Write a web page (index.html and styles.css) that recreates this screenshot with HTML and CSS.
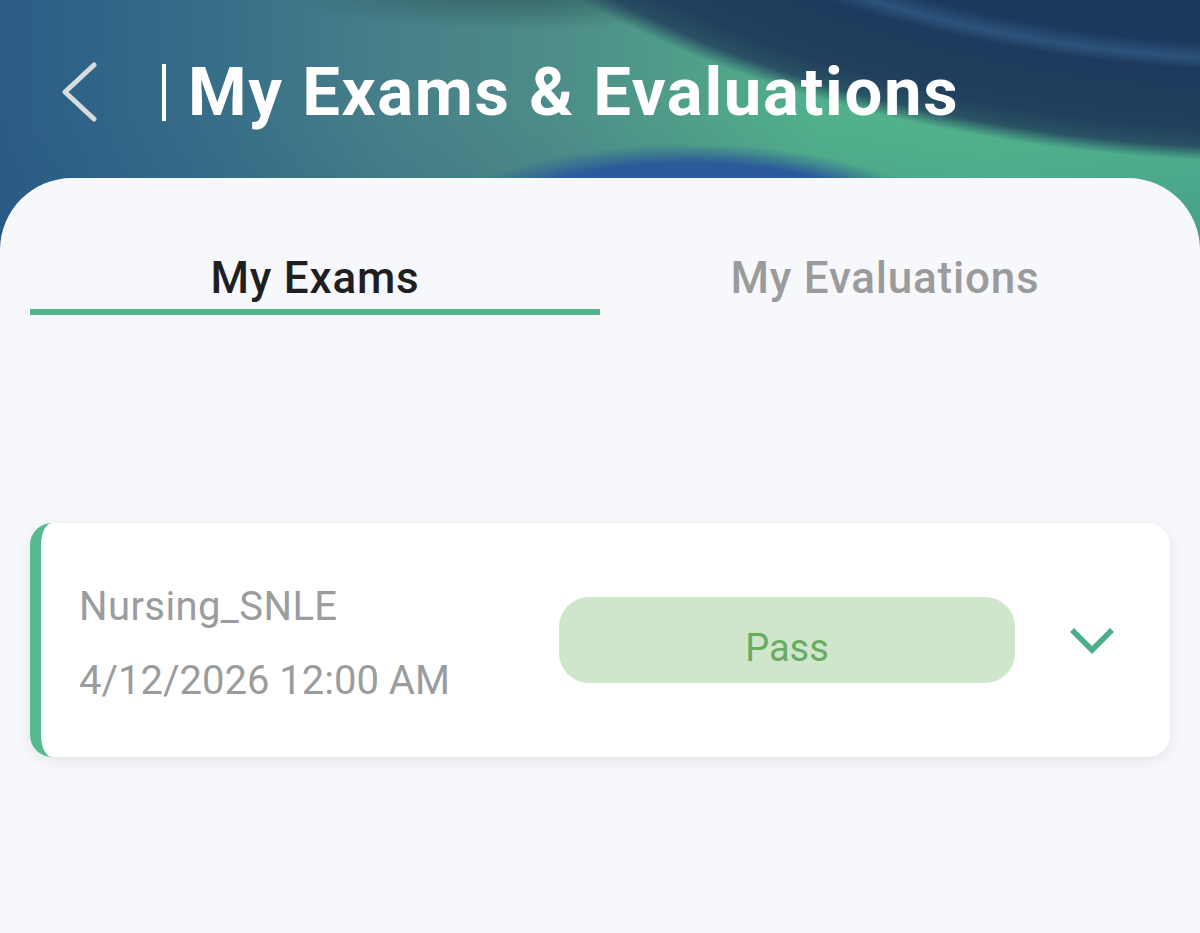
FILE: index.html
```html
<!DOCTYPE html>
<html lang="en">
  <head>
    <meta charset="UTF-8" />
    <meta name="viewport" content="width=device-width, initial-scale=1.0" />
    <title>My Exams &amp; Evaluations</title>
    <link rel="stylesheet" href="styles.css">
  </head>
  <body>
    <div class="page">
      <header class="top-bar">
        <button class="back-button" aria-label="Back">
          <svg width="38" height="60" viewBox="0 0 38 60">
            <path d="M34 3 L5 30 L34 57" fill="none" stroke="#d9dcdf" stroke-width="5" stroke-linecap="round" stroke-linejoin="round" />
          </svg>
        </button>
        <span class="title-divider"></span>
        <h1 class="page-title">My Exams &amp; Evaluations</h1>
      </header>

      <main class="sheet">
        <nav class="tabs">
          <div class="tab active">My Exams</div>
          <div class="tab">My Evaluations</div>
        </nav>

        <ul class="exam-list">
          <li class="exam-card">
            <div class="exam-info">
              <p class="exam-name">Nursing_SNLE</p>
              <p class="exam-date">4/12/2026 12:00 AM</p>
            </div>
            <span class="status-pill pass">Pass</span>
            <button class="expand-button" aria-label="Expand">
              <svg width="44" height="26" viewBox="0 0 44 26">
                <path d="M4 4 L22 22 L40 4" fill="none" stroke="#4caf8a" stroke-width="5.5" stroke-linecap="square" />
              </svg>
            </button>
          </li>
        </ul>
      </main>
    </div>
  </body>
</html>
```

FILE: styles.css
```css
* {
  box-sizing: border-box;
  font-family: Roboto, "Noto Sans", sans-serif;
  margin: 0;
}
body {
  background-color: #f7f8fc;
}
.page {
  width: 1200px;
  min-height: 933px;
  background-color: #f7f8fc;
  background-image:
    /* blue wave under the title */
    radial-gradient(ellipse 260px 88px at 690px 232px, #2b5ea2 0%, #2a5a9a 78%, rgba(42, 90, 154, 0) 100%),
    /* light streak in the navy area */
    radial-gradient(ellipse 800px 372px at 1300px -300px, rgba(60, 110, 160, 0) 93%, rgba(58, 105, 150, 0.55) 97%, rgba(60, 110, 160, 0) 100%),
    /* navy top right */
    radial-gradient(ellipse 947px 463px at 1300px -300px, #1a3457 0%, #1c395c 78%, #213f5d 93%, rgba(34, 66, 92, 0.85) 97%, rgba(34, 66, 92, 0) 100%),
    /* dark shade at the top middle */
    radial-gradient(ellipse 240px 40px at 520px -10px, rgba(45, 85, 90, 0.8) 0%, rgba(45, 85, 90, 0) 100%),
    linear-gradient(180deg, rgba(30, 70, 120, 0) 45%, rgba(30, 70, 120, 0.18) 100%),
    linear-gradient(90deg, #2b5c87 0%, #376e88 18%, #467f89 32%, #4d8c88 46%, #4f9d89 56%, #51b08b 68%, #52b48c 82%, #4fb08d 100%);
  background-size: 100% 260px;
  background-repeat: no-repeat;
}

/* header */
.top-bar {
  height: 178px;
  display: flex;
  align-items: center;
  padding: 6px 0 0 60px;
}
.back-button {
  background: none;
  border: none;
  padding: 0;
  display: flex;
  cursor: pointer;
}
.title-divider {
  width: 4px;
  height: 57px;
  background-color: #ffffff;
  margin: 0 22px 0 64px;
}
.page-title {
  color: #ffffff;
  font-size: 67px;
  font-weight: 700;
  line-height: 1;
  letter-spacing: 1.7px;
}

/* white sheet */
.sheet {
  min-height: 755px;
  background-color: #f7f8fc;
  border-radius: 72px 72px 0 0;
  padding: 72px 30px 0 30px;
}
.tabs {
  display: flex;
}
.tab {
  flex: 1;
  text-align: center;
  font-size: 44px;
  font-weight: 500;
  line-height: 56px;
  padding-bottom: 3px;
  border-bottom: 6px solid transparent;
  color: #9b9b9b;
  letter-spacing: 0.8px;
}
.tab.active {
  color: #1f1f1f;
  border-bottom-color: #53b38c;
}

/* exams */
.exam-list {
  list-style-type: none;
  padding: 0;
  margin-top: 208px;
}
.exam-card {
  display: flex;
  align-items: center;
  height: 234px;
  background-color: #ffffff;
  border-left: 11px solid #55bb8f;
  border-radius: 22px;
  box-shadow: 0 4px 14px rgba(0, 0, 0, 0.08);
  padding: 8px 0 0 38px;
}
.exam-info {
  width: 480px;
}
.exam-name,
.exam-date {
  font-size: 40px;
  line-height: 50px;
  color: #9a9c9e;
}
.exam-name {
  letter-spacing: 0.4px;
}
.exam-date {
  margin-top: 24px;
}
.status-pill {
  width: 456px;
  height: 86px;
  border-radius: 30px;
  display: flex;
  align-items: center;
  justify-content: center;
  font-size: 38px;
  margin-top: -8px;
  padding-top: 15px;
}
.status-pill.pass {
  background-color: #cfe6cd;
  color: #6aab63;
}
.expand-button {
  background: none;
  border: none;
  padding: 0;
  margin: -6px 0 0 55px;
  display: flex;
  cursor: pointer;
}
```
